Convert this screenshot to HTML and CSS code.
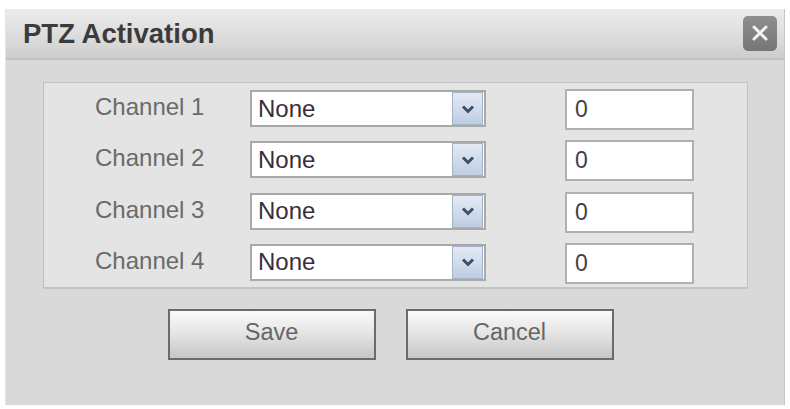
FILE: index.html
```html
<!DOCTYPE html>
<html>
<head>
<meta charset="utf-8">
<link rel="stylesheet" href="styles.css">
</head>
<body>
<div class="dialog">
  <div class="header">
    <span class="title">PTZ Activation</span>
    <span class="close">
      <svg width="18" height="18" viewBox="0 0 18 18"><path d="M3 3 L15 15 M15 3 L3 15" stroke="#f4f4f4" stroke-width="3" stroke-linecap="round"/></svg>
    </span>
  </div>
  <div class="body">
    <div class="box">
      <div class="label">Channel 1</div>
      <div class="select"><span class="val">None</span><span class="arrow"><svg width="16" height="10" viewBox="0 0 16 10"><path d="M3 2.5 L8 7.5 L13 2.5" fill="none" stroke="#3e4f6c" stroke-width="3"/></svg></span></div>
      <div class="input">0</div>

      <div class="label">Channel 2</div>
      <div class="select"><span class="val">None</span><span class="arrow"><svg width="16" height="10" viewBox="0 0 16 10"><path d="M3 2.5 L8 7.5 L13 2.5" fill="none" stroke="#3e4f6c" stroke-width="3"/></svg></span></div>
      <div class="input">0</div>

      <div class="label">Channel 3</div>
      <div class="select"><span class="val">None</span><span class="arrow"><svg width="16" height="10" viewBox="0 0 16 10"><path d="M3 2.5 L8 7.5 L13 2.5" fill="none" stroke="#3e4f6c" stroke-width="3"/></svg></span></div>
      <div class="input">0</div>

      <div class="label">Channel 4</div>
      <div class="select"><span class="val">None</span><span class="arrow"><svg width="16" height="10" viewBox="0 0 16 10"><path d="M3 2.5 L8 7.5 L13 2.5" fill="none" stroke="#3e4f6c" stroke-width="3"/></svg></span></div>
      <div class="input">0</div>
    </div>
    <div class="buttons">
      <div class="btn">Save</div>
      <div class="btn">Cancel</div>
    </div>
  </div>
</div>
</body>
</html>
```

FILE: styles.css
```css
html, body {
  margin: 0;
  padding: 0;
  background: #ffffff;
  font-family: "Liberation Sans", Arial, sans-serif;
}

.dialog {
  margin: 9px 5px 0 5px;
  width: 778px;
  height: 396px;
  background: #d9d9d9;
  border-left: 1px solid #e4e4e4;
  border-right: 1px solid #c6c6c6;
  display: flex;
  flex-direction: column;
}

.header {
  height: 49px;
  background: linear-gradient(#ececec, #d8d8d8 70%, #cdcdcd);
  border-bottom: 2px solid #c2c2c2;
  display: flex;
  align-items: center;
  justify-content: space-between;
  padding: 0 7px 0 17px;
}

.title {
  font-weight: bold;
  font-size: 27.5px;
  color: #3b3b3b;
}

.close {
  width: 34px;
  height: 35px;
  border-radius: 5px;
  background: linear-gradient(#8e8e8e, #767676);
  display: flex;
  align-items: center;
  justify-content: center;
  margin-top: -1px;
}

.body {
  flex: 1;
  padding: 22px 36px 0 37px;
}

.box {
  background: #e4e4e4;
  border: 1px solid #c4c4c4;
  border-left-color: #bdbdbd;
  border-bottom: 2px solid #c4c4c4;
  padding: 7px 0 3px 51px;
  display: grid;
  grid-template-columns: 155px 236px 208px;
  grid-auto-rows: 40px;
  row-gap: 11.3px;
  align-items: start;
}

.label {
  font-size: 24px;
  color: #6a6a6a;
  line-height: 34px;
}

.select {
  width: 236px;
  height: 37px;
  box-sizing: border-box;
  background: #ffffff;
  border: 2px solid #a9a9a9;
  display: flex;
  align-items: center;
  justify-content: space-between;
  padding: 0 1px 0 6px;
}

.val {
  font-size: 24px;
  color: #3a2e3c;
}

.arrow {
  width: 31px;
  height: 33px;
  box-sizing: border-box;
  border: 1px solid #a5b3c9;
  background: linear-gradient(#e3eaf5, #bfcde2);
  display: flex;
  align-items: center;
  justify-content: center;
}

.input {
  margin-left: 79px;
  width: 129px;
  height: 41px;
  box-sizing: border-box;
  margin-top: -1px;
  background: #ffffff;
  border: 2px solid #b0b0b0;
  font-size: 23px;
  color: #463c48;
  display: flex;
  align-items: center;
  padding-left: 8px;
}

.buttons {
  display: flex;
  justify-content: center;
  gap: 30px;
  margin-top: 20px;
  padding-right: 10px;
}

.btn {
  width: 208px;
  height: 51px;
  box-sizing: border-box;
  border: 2px solid #6b6b6b;
  background: linear-gradient(#fafafa, #e6e6e6 45%, #c6c6c6);
  display: flex;
  align-items: center;
  justify-content: center;
  font-size: 23.5px;
  color: #666;
  padding-bottom: 4px;
}
```
